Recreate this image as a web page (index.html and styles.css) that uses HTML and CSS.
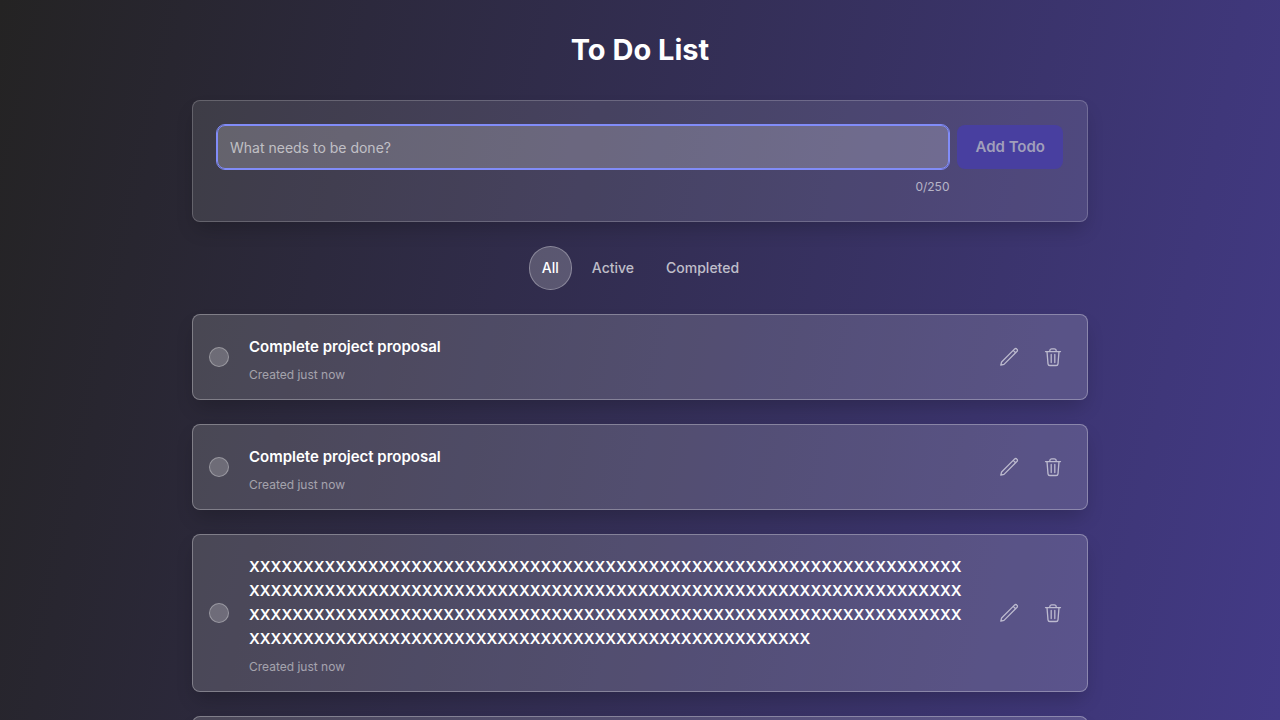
FILE: index.html
```html
<!DOCTYPE html>
<html lang="en">
<head>
<meta charset="utf-8">
<meta name="viewport" content="width=device-width, initial-scale=1">
<title>To Do List</title>
<link rel="stylesheet" href="styles.css">
</head>
<body>
<svg class="sprite" aria-hidden="true">
  <symbol id="pencil" viewBox="0 0 20 20">
    <path d="M1.800 18.200l.8-3.200L14.700 2.900l.9-.9a1.500 1.500 0 0 1 2.200 0l.2.200a1.500 1.500 0 0 1 0 2.200l-.9.900L5 17.400zM14.200 3.400l2.400 2.400"/>
  </symbol>
  <symbol id="trash" viewBox="0 0 20 20">
    <path d="M2.500 4.600h15M4 4.600l1 12.300a1.800 1.800 0 0 0 1.800 1.600h6.400a1.800 1.800 0 0 0 1.800-1.600L16 4.600M6.800 4.600V3.800a2 2 0 0 1 2-2h2.400a2 2 0 0 1 2 2v.8M8.200 7.500v8M11.800 7.500v8"/>
  </symbol>
</svg>
<main class="page">
  <h1 class="title">To Do List</h1>
  <form class="card composer">
    <div class="field">
      <input class="field-input" type="text" aria-label="New todo" placeholder="What needs to be done?" maxlength="250">
      <span class="field-count">0/250</span>
    </div>
    <button class="add" type="button" disabled>Add Todo</button>
  </form>
  <nav class="filters" aria-label="Filter todos">
    <button class="filter filter-on" type="button">All</button>
    <button class="filter" type="button">Active</button>
    <button class="filter" type="button">Completed</button>
  </nav>
  <ul class="list" id="list"></ul>
</main>
<template id="todo-template">
  <li class="card todo">
    <input class="todo-check" type="checkbox">
    <div class="todo-body">
      <label class="todo-text"></label>
      <span class="todo-date">Created just now</span>
    </div>
    <div class="actions">
      <button class="action" type="button" aria-label="Edit"><svg class="icon"><use href="#pencil"/></svg></button>
      <button class="action" type="button" aria-label="Delete"><svg class="icon"><use href="#trash"/></svg></button>
    </div>
  </li>
</template>
<script src="todos.js"></script>
</body>
</html>
```
FILE: todos.js
```js
const todos = [
  "Complete project proposal",
  "Complete project proposal",
  "X".repeat(250),
  "Complete project proposal",
];

const list = document.getElementById("list");
const template = document.getElementById("todo-template");

todos.forEach((text, index) => {
  const item = template.content.cloneNode(true);
  const check = item.querySelector(".todo-check");
  const label = item.querySelector(".todo-text");
  check.id = "todo-" + (index + 1);
  label.htmlFor = check.id;
  label.textContent = text;
  list.append(item);
});
```
FILE: styles.css
```css
* {
  box-sizing: border-box;
}

body {
  margin: 0;
  height: 100vh;
  overflow: hidden;
  background: linear-gradient(102deg, #242323, #433a87);
  color: #fff;
  font-family: Inter, "Liberation Sans", sans-serif;
  font-size: 15px;
  line-height: 24px;
}

button,
input {
  font: inherit;
  color: inherit;
  margin: 0;
}

.sprite {
  display: none;
}

.page {
  max-width: 928px;
  margin: 0 auto;
  padding: 32px 16px;
}

.title {
  margin: 0 0 32px;
  font-size: 29px;
  line-height: 36px;
  font-weight: 700;
  text-align: center;
}

.card {
  border: 1px solid rgba(255, 255, 255, 0.2);
  border-radius: 8px;
  background: rgba(255, 255, 255, 0.1);
  box-shadow: 0 10px 20px -4px rgba(0, 0, 0, 0.2);
}

.composer {
  display: flex;
  align-items: flex-start;
  gap: 8px;
  padding: 24px;
  margin-bottom: 24px;
}

.field {
  display: flex;
  flex: 1;
  flex-direction: column;
  gap: 10px;
  padding-bottom: 2px;
}

.field-input {
  width: 100%;
  height: 44px;
  padding: 0 12px;
  border: 1px solid #818cf8;
  border-radius: 8px;
  outline: 1px solid #818cf8;
  background: rgba(255, 255, 255, 0.2);
  font-size: 14px;
}

.field-input::placeholder {
  color: rgba(255, 255, 255, 0.6);
}

.field-count {
  font-size: 12px;
  line-height: 16px;
  text-align: right;
  color: rgba(255, 255, 255, 0.6);
}

.add {
  height: 44px;
  padding: 0 18px;
  border: 0;
  border-radius: 8px;
  background: #483fa0;
  color: #a19fbb;
  font-weight: 600;
}

.filters {
  display: flex;
  justify-content: center;
  gap: 8px;
  margin-bottom: 24px;
}

.filter {
  height: 44px;
  padding: 0 12px;
  border: 0;
  border-radius: 22px;
  background: none;
  color: rgba(255, 255, 255, 0.7);
  font-size: 14px;
  font-weight: 500;
}

.filter-on {
  border: 1px solid rgba(255, 255, 255, 0.3);
  background: rgba(255, 255, 255, 0.2);
  color: #fff;
}

.list {
  display: flex;
  flex-direction: column;
  gap: 24px;
  margin: 0;
  padding: 0;
  list-style: none;
}

.todo {
  display: flex;
  align-items: center;
  padding: 16px 12px 16px 16px;
  border-color: rgba(255, 255, 255, 0.3);
  background: rgba(255, 255, 255, 0.15);
}

.todo-check {
  flex: none;
  width: 20px;
  height: 20px;
  border: 1px solid rgba(255, 255, 255, 0.3);
  border-radius: 50%;
  background: rgba(255, 255, 255, 0.2);
  appearance: none;
}

.todo-body {
  display: flex;
  flex: 1;
  flex-direction: column;
  gap: 8px;
  min-width: 0;
  padding: 4px 16px 0 20px;
}

.todo-text {
  font-weight: 600;
  overflow-wrap: anywhere;
}

.todo-date {
  font-size: 12px;
  line-height: 16px;
  color: rgba(255, 255, 255, 0.5);
}

.actions {
  display: flex;
}

.action {
  display: flex;
  align-items: center;
  justify-content: center;
  width: 44px;
  height: 44px;
  padding: 0;
  border: 0;
  background: none;
  color: rgba(255, 255, 255, 0.6);
}

.icon {
  width: 20px;
  height: 20px;
  fill: none;
  stroke: currentColor;
  stroke-width: 1.3;
  stroke-linecap: round;
  stroke-linejoin: round;
}
```
